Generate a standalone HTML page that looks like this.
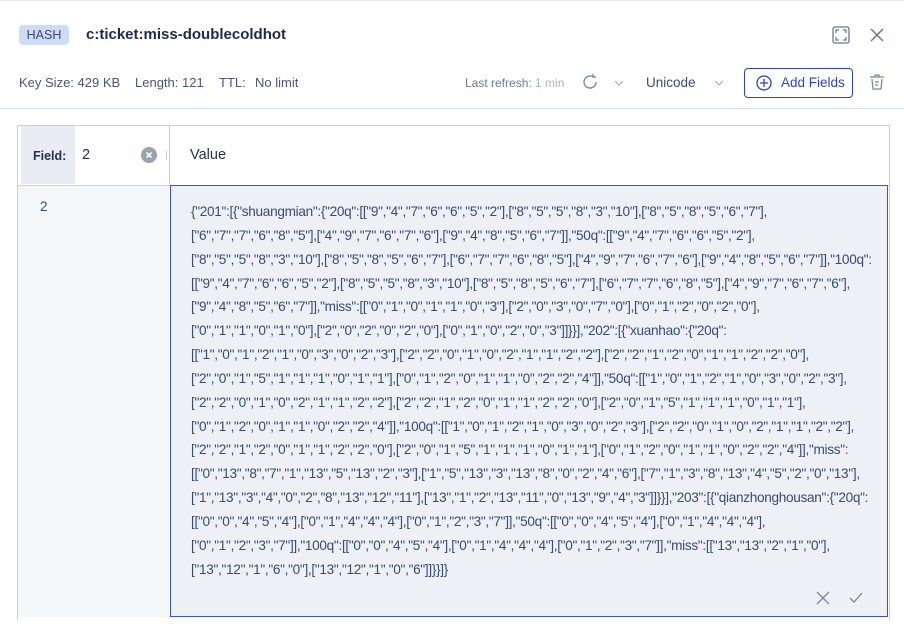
<!DOCTYPE html>
<html><head><meta charset="utf-8"><style>
*{box-sizing:border-box;margin:0;padding:0}
body{width:904px;height:629px;background:#fff;font-family:"Liberation Sans",sans-serif;color:#27314f;position:relative;overflow:hidden}
.abs{position:absolute}
.tag{left:19px;top:25px;width:50px;height:20px;background:#cfdcf5;border-radius:4px;font-size:12.5px;color:#3b4a6e;text-align:center;line-height:20px}
.title{left:86px;top:26px;font-size:15px;font-weight:bold;color:#1e2a4d}
.meta{top:75px;font-size:13px;color:#4a5677}
.hr{left:0;top:108px;width:904px;height:1px;background:#d3dbe8}
.table{left:17px;top:125px;width:873px;height:495px;border:1px solid #c9d0dc;border-bottom:none}
.val{left:170px;top:185px;width:718px;height:432px;background:#edf0f5;border:1px solid #3a55c8}
.lines{left:191px;top:200px;font-size:13.6px;color:#3a4a72;line-height:23.85px;white-space:nowrap;letter-spacing:-0.3px}
</style></head><body>
<div class="abs" style="left:0;top:0;width:904px;height:1px;background:#e8ecf2"></div>
<div class="abs tag">HASH</div>
<div class="abs title">c:ticket:miss-doublecoldhot</div>
<svg class="abs" style="left:832px;top:26px" width="18" height="18" viewBox="0 0 18 18" fill="none" stroke="#6b7795" stroke-width="1.3"><rect x="1" y="1" width="16" height="16" rx="2"/><path d="M4 7V4h3M11 4h3v3M14 11v3h-3M7 14H4v-3"/></svg>
<svg class="abs" style="left:869px;top:27px" width="16" height="16" viewBox="0 0 16 16" stroke="#6b7795" stroke-width="1.5"><path d="M2 2l12 12M14 2L2 14"/></svg>
<div class="abs meta" style="left:19px">Key Size: 429 KB</div>
<div class="abs meta" style="left:135px">Length: 121</div>
<div class="abs meta" style="left:219px">TTL:</div>
<div class="abs meta" style="left:255px">No limit</div>
<div class="abs" style="left:465px;top:76px;font-size:12px;color:#6b7795">Last refresh: <span style="color:#a9b1c3">1 min</span></div>
<svg class="abs" style="left:581px;top:73px" width="18" height="18" viewBox="0 0 18 18" fill="none" stroke="#7d88a3" stroke-width="1.4"><path d="M15 9a6 6 0 1 1-3-5.2"/><path d="M12 1v3h3"/></svg>
<svg class="abs" style="left:614px;top:80px" width="10" height="6" viewBox="0 0 10 6" fill="none" stroke="#9aa3b8"><path d="M1 1l4 4 4-4"/></svg>
<div class="abs" style="left:646px;top:75px;font-size:13.5px;color:#3b4a6e">Unicode</div>
<svg class="abs" style="left:714px;top:80px" width="10" height="6" viewBox="0 0 10 6" fill="none" stroke="#9aa3b8"><path d="M1 1l4 4 4-4"/></svg>
<div class="abs" style="left:744px;top:68px;width:109px;height:30px;border:1px solid #2e45b8;border-radius:4px"></div>
<svg class="abs" style="left:756px;top:75px" width="16" height="16" viewBox="0 0 16 16" fill="none" stroke="#2e45b8" stroke-width="1.3"><circle cx="8" cy="8" r="7"/><path d="M8 4v8M4 8h8"/></svg>
<div class="abs" style="left:781px;top:75px;font-size:13.5px;color:#2e45b8">Add Fields</div>
<svg class="abs" style="left:868px;top:73px" width="18" height="18" viewBox="0 0 18 18" fill="none" stroke="#7d88a3" stroke-width="1.3"><path d="M2 4h14M7 4V2h4v2M4 6l1 10h8l1-10M7 9h4M7 12h3"/></svg>
<div class="abs hr"></div>
<div class="abs table"></div>
<div class="abs" style="left:21px;top:126px;width:54px;height:58px;background:#e9ecf3"></div>
<div class="abs" style="left:33px;top:149px;font-size:12.5px;font-weight:bold;color:#27314f">Field:</div>
<div class="abs" style="left:82px;top:147px;font-size:14.5px;color:#27314f">2</div>
<svg class="abs" style="left:141px;top:147px" width="16" height="16" viewBox="0 0 16 16"><circle cx="8" cy="8" r="8" fill="#9aa1b0"/><path d="M5.5 5.5l5 5M10.5 5.5l-5 5" stroke="#fff" stroke-width="1.6"/></svg>
<div class="abs" style="left:166px;top:151px;width:1px;height:9px;background:#c9d0dc"></div>
<div class="abs" style="left:169px;top:126px;width:1px;height:491px;background:#c9d0dc"></div>
<div class="abs" style="left:190px;top:147px;font-size:14.5px;color:#27314f">Value</div>
<div class="abs" style="left:18px;top:185px;width:871px;height:1px;background:#c9d0dc"></div>
<div class="abs" style="left:18px;top:186px;width:152px;height:431px;background:#f5f6f8"></div>
<div class="abs" style="left:40px;top:199px;font-size:13.5px;color:#3a4a72">2</div>
<div class="abs val"></div>
<div class="abs lines">{"201":[{"shuangmian":{"20q":[["9","4","7","6","6","5","2"],["8","5","5","8","3","10"],["8","5","8","5","6","7"],<br>["6","7","7","6","8","5"],["4","9","7","6","7","6"],["9","4","8","5","6","7"]],"50q":[["9","4","7","6","6","5","2"],<br>["8","5","5","8","3","10"],["8","5","8","5","6","7"],["6","7","7","6","8","5"],["4","9","7","6","7","6"],["9","4","8","5","6","7"]],"100q":<br>[["9","4","7","6","6","5","2"],["8","5","5","8","3","10"],["8","5","8","5","6","7"],["6","7","7","6","8","5"],["4","9","7","6","7","6"],<br>["9","4","8","5","6","7"]],"miss":[["0","1","0","1","1","0","3"],["2","0","3","0","7","0"],["0","1","2","0","2","0"],<br>["0","1","1","0","1","0"],["2","0","2","0","2","0"],["0","1","0","2","0","3"]]}}],"202":[{"xuanhao":{"20q":<br>[["1","0","1","2","1","0","3","0","2","3"],["2","2","0","1","0","2","1","1","2","2"],["2","2","1","2","0","1","1","2","2","0"],<br>["2","0","1","5","1","1","1","0","1","1"],["0","1","2","0","1","1","0","2","2","4"]],"50q":[["1","0","1","2","1","0","3","0","2","3"],<br>["2","2","0","1","0","2","1","1","2","2"],["2","2","1","2","0","1","1","2","2","0"],["2","0","1","5","1","1","1","0","1","1"],<br>["0","1","2","0","1","1","0","2","2","4"]],"100q":[["1","0","1","2","1","0","3","0","2","3"],["2","2","0","1","0","2","1","1","2","2"],<br>["2","2","1","2","0","1","1","2","2","0"],["2","0","1","5","1","1","1","0","1","1"],["0","1","2","0","1","1","0","2","2","4"]],"miss":<br>[["0","13","8","7","1","13","5","13","2","3"],["1","5","13","3","13","8","0","2","4","6"],["7","1","3","8","13","4","5","2","0","13"],<br>["1","13","3","4","0","2","8","13","12","11"],["13","1","2","13","11","0","13","9","4","3"]]}}],"203":[{"qianzhonghousan":{"20q":<br>[["0","0","4","5","4"],["0","1","4","4","4"],["0","1","2","3","7"]],"50q":[["0","0","4","5","4"],["0","1","4","4","4"],<br>["0","1","2","3","7"]],"100q":[["0","0","4","5","4"],["0","1","4","4","4"],["0","1","2","3","7"]],"miss":[["13","13","2","1","0"],<br>["13","12","1","6","0"],["13","12","1","0","6"]]}}]}</div>
<svg class="abs" style="left:816px;top:591px" width="14" height="14" viewBox="0 0 14 14" stroke="#7d88a3" stroke-width="1.3"><path d="M1 1l12 12M13 1L1 13"/></svg>
<svg class="abs" style="left:849px;top:592px" width="14" height="12" viewBox="0 0 14 12" fill="none" stroke="#7d88a3" stroke-width="1.3"><path d="M1 6l4 4 8-9"/></svg>
</body></html>
